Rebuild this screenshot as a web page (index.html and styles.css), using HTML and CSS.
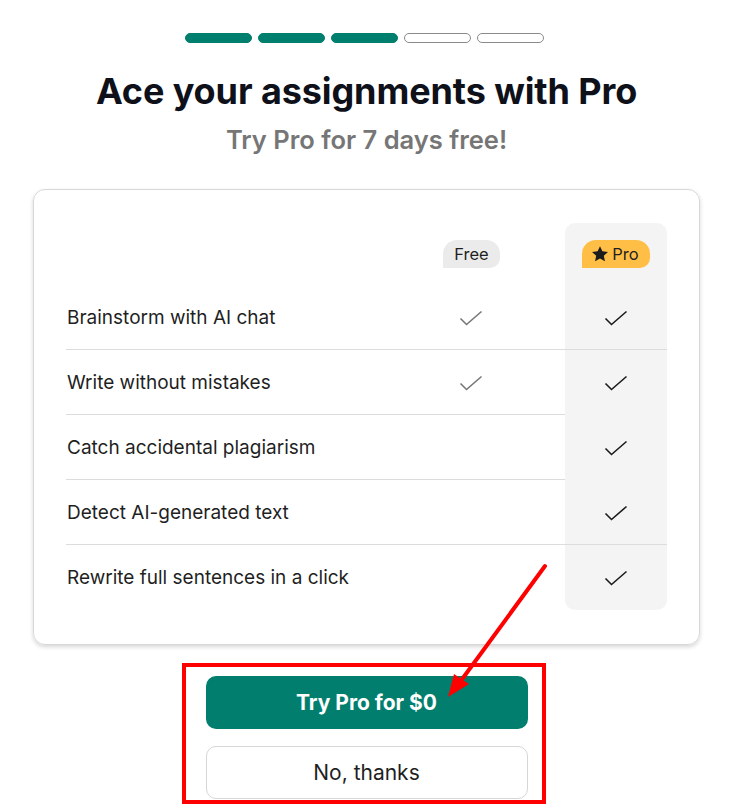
FILE: index.html
```html
<!DOCTYPE html>
<html lang="en">
<head>
    <meta charset="UTF-8">
    <meta name="viewport" content="width=device-width, initial-scale=1.0">
    <title>Ace your assignments with Pro</title>
    <link rel="stylesheet" href="styles.css">
</head>
<body>

    <div class="page">
        <!-- Step progress -->
        <div class="steps">
            <span class="step done"></span>
            <span class="step done"></span>
            <span class="step done"></span>
            <span class="step"></span>
            <span class="step"></span>
        </div>

        <h1>Ace your assignments with Pro</h1>
        <p class="subtitle">Try Pro for 7 days free!</p>

        <!-- Plan comparison -->
        <div class="card">
            <div class="table">
                <div class="pro-bg"></div>

                <div class="row head">
                    <div class="label"></div>
                    <div class="col"><span class="badge free">Free</span></div>
                    <div class="col"><span class="badge pro">
                        <svg width="18" height="18" viewBox="0 0 24 24"><path d="M12 1.5l3.2 6.8 7.4.9-5.5 5.1 1.5 7.3L12 18l-6.6 3.6 1.5-7.3-5.5-5.1 7.4-.9z" fill="#1b1b1b"/></svg>
                        Pro</span></div>
                </div>

                <div class="row line-full">
                    <div class="label">Brainstorm with AI chat</div>
                    <div class="col"><svg class="check grey" viewBox="0 0 24 16"><path d="M1.5 8.5l6 6L22.5 1.5"/></svg></div>
                    <div class="col"><svg class="check" viewBox="0 0 24 16"><path d="M1.5 8.5l6 6L22.5 1.5"/></svg></div>
                </div>
                <div class="row line">
                    <div class="label">Write without mistakes</div>
                    <div class="col"><svg class="check grey" viewBox="0 0 24 16"><path d="M1.5 8.5l6 6L22.5 1.5"/></svg></div>
                    <div class="col"><svg class="check" viewBox="0 0 24 16"><path d="M1.5 8.5l6 6L22.5 1.5"/></svg></div>
                </div>
                <div class="row line">
                    <div class="label">Catch accidental plagiarism</div>
                    <div class="col"></div>
                    <div class="col"><svg class="check" viewBox="0 0 24 16"><path d="M1.5 8.5l6 6L22.5 1.5"/></svg></div>
                </div>
                <div class="row line-full">
                    <div class="label">Detect AI-generated text</div>
                    <div class="col"></div>
                    <div class="col"><svg class="check" viewBox="0 0 24 16"><path d="M1.5 8.5l6 6L22.5 1.5"/></svg></div>
                </div>
                <div class="row">
                    <div class="label">Rewrite full sentences in a click</div>
                    <div class="col"></div>
                    <div class="col"><svg class="check" viewBox="0 0 24 16"><path d="M1.5 8.5l6 6L22.5 1.5"/></svg></div>
                </div>
            </div>
        </div>

        <!-- Actions -->
        <div class="actions">
            <button class="btn primary">Try Pro for $0</button>
            <button class="btn secondary">No, thanks</button>
        </div>
    </div>

    <!-- Red annotation drawn over the screenshot -->
    <div class="mark-box"></div>
    <svg class="mark-arrow" width="730" height="809" viewBox="0 0 730 809">
        <line x1="545" y1="566" x2="460" y2="682" stroke="#ff0000" stroke-width="4" stroke-linecap="round"/>
        <polygon points="448,697 454,674 469,684" fill="#ff0000"/>
    </svg>

</body>
</html>
```

FILE: styles.css
```css
body {
    margin: 0;
    padding: 0;
    background: #fff;
    font-family: Inter, "Noto Sans", Arial, sans-serif;
    color: #1f1f1f;
}

.page {
    width: 667px;
    margin-left: 33px;
    padding-top: 33px;
}

/* progress segments */
.steps {
    display: flex;
    justify-content: center;
    gap: 6px;
    margin-left: -5px;
}
.step {
    width: 67px;
    height: 10px;
    box-sizing: border-box;
    border: 1.5px solid #8a8a8a;
    border-radius: 5px;
    background: #fff;
}
.step.done {
    background: #007e6e;
    border-color: #007e6e;
}

h1 {
    margin: 27px 0 0;
    text-align: center;
    font-size: 36px;
    line-height: 43px;
    font-weight: 700;
    color: #0e101a;
    letter-spacing: -0.1px;
}

.subtitle {
    margin: 12px 0 0;
    text-align: center;
    font-size: 25.5px;
    line-height: 30px;
    font-weight: 600;
    color: #767676;
}

.card {
    margin-top: 34px;
    border: 1px solid #d8d8d8;
    border-radius: 12px;
    box-shadow: 0 2px 4px rgba(0, 0, 0, 0.16);
    padding: 33px 32px 34px 32px;
}

.table {
    position: relative;
}
/* shaded Pro column behind the rows */
.pro-bg {
    position: absolute;
    top: 0;
    bottom: 0;
    right: 0;
    width: 102px;
    background: #f4f4f4;
    border-radius: 10px;
}

.row {
    position: relative;
    display: grid;
    grid-template-columns: 1fr 102px 102px;
    column-gap: 43px;
    align-items: center;
    height: 65px;
}
.row.head {
    height: 62px;
    align-items: start;
}
.row.line::after,
.row.line-full::after {
    content: "";
    position: absolute;
    left: 0;
    right: 102px;
    bottom: 0;
    border-bottom: 1px solid #dcdcdc;
}
.row.line-full::after {
    right: 0;
}

.label {
    font-size: 19px;
    padding-left: 1px;
}

.col {
    display: flex;
    justify-content: center;
}

.badge {
    margin-top: 17px;
    display: inline-flex;
    align-items: center;
    gap: 3px;
    height: 28px;
    padding: 0 11px;
    font-size: 16.5px;
    border-radius: 14px 14px 10px 0;
    color: #1f1f1f;
}
.badge.free {
    background: #ebebeb;
    margin-left: 1px;
}
.badge.pro {
    background: #ffbf47;
    padding: 0 11px 0 9px;
}

.check {
    width: 24px;
    height: 16px;
    fill: none;
    stroke: #1b1b1b;
    stroke-width: 1.6;
}
.check.grey {
    stroke: #777;
}

.actions {
    width: 322px;
    margin: 31px auto 0;
    display: flex;
    flex-direction: column;
    gap: 17px;
}
.btn {
    height: 53px;
    border-radius: 10px;
    font-family: Inter, "Noto Sans", Arial, sans-serif;
    font-size: 21px;
    cursor: pointer;
}
.btn.primary {
    background: #027e6f;
    border: none;
    color: #fff;
    font-weight: 700;
}
.btn.secondary {
    background: #fff;
    border: 1px solid #d6d6d6;
    color: #1f1f1f;
    font-weight: 400;
}

/* annotation overlay */
.mark-box {
    position: absolute;
    left: 182px;
    top: 663px;
    width: 364px;
    height: 141px;
    box-sizing: border-box;
    border: 4px solid #ff0000;
}
.mark-arrow {
    position: absolute;
    left: 0;
    top: 0;
    pointer-events: none;
}
```
